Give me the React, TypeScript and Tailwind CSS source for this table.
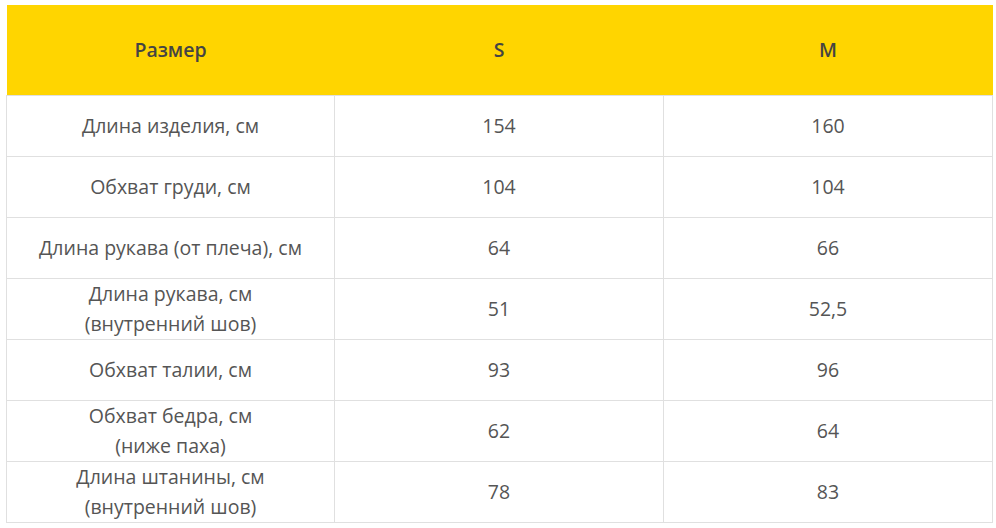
const rows: [string[], string, string][] = [
    [["Длина изделия, см"], "154", "160"],
    [["Обхват груди, см"], "104", "104"],
    [["Длина рукава (от плеча), см"], "64", "66"],
    [["Длина рукава, см", "(внутренний шов)"], "51", "52,5"],
    [["Обхват талии, см"], "93", "96"],
    [["Обхват бедра, см", "(ниже паха)"], "62", "64"],
    [["Длина штанины, см", "(внутренний шов)"], "78", "83"],
]

function App() {
    return (
        <div className="min-h-screen bg-white pt-[5px] pl-[6px]" style={{ fontFamily: '"Open Sans", "Liberation Sans", sans-serif' }}>
            <table className="w-[987px] table-fixed border-collapse text-[19.5px] text-[#555555]">
                <thead>
                    <tr className="h-[90px] bg-[#ffd500]">
                        <th className="w-[328px] text-center font-semibold text-[#444444]">Размер</th>
                        <th className="w-[329px] text-center font-semibold text-[#444444]">S</th>
                        <th className="text-center font-semibold text-[#444444]">M</th>
                    </tr>
                </thead>
                <tbody>
                    {rows.map(([label, s, m], i) => (
                        <tr key={i} className="h-[61px]">
                            <td className="border border-[#e0e0e0] p-0 text-center leading-[30px]">
                                {label.map((line, j) => (
                                    <div key={j}>{line}</div>
                                ))}
                            </td>
                            <td className="border border-[#e0e0e0] p-0 text-center">{s}</td>
                            <td className="border border-[#e0e0e0] p-0 text-center">{m}</td>
                        </tr>
                    ))}
                </tbody>
            </table>
        </div>
    )
}

export default App
